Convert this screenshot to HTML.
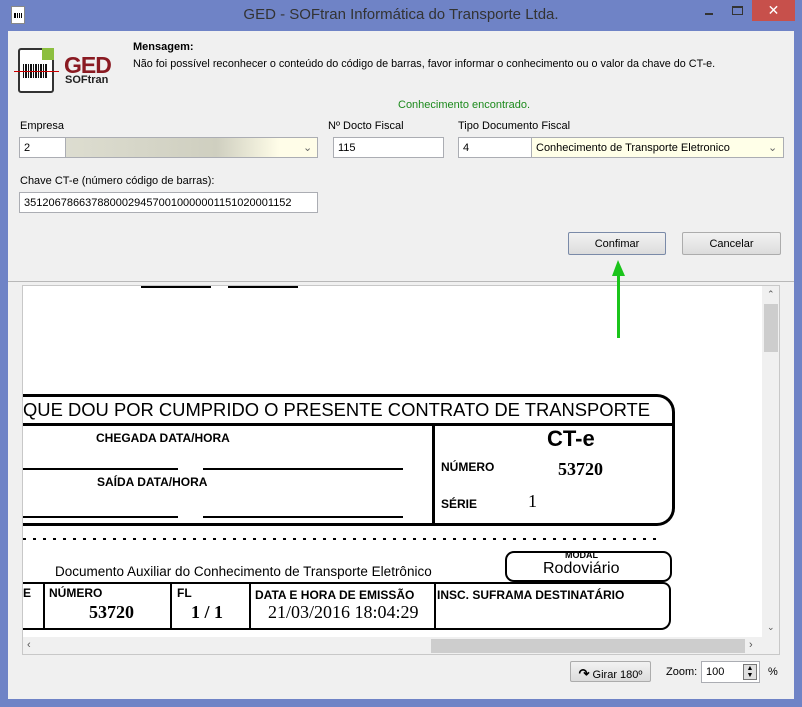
<!DOCTYPE html>
<html><head><meta charset="utf-8"><style>
*{margin:0;padding:0;box-sizing:border-box}
body{width:802px;height:707px;background:#6f83c6;font-family:"Liberation Sans",sans-serif;font-size:11px;color:#000;position:relative;overflow:hidden}
.a{position:absolute}
.client{left:8px;top:31px;width:786px;height:668px;background:#f0f0f0}
.inp{position:absolute;background:#fff;border:1px solid #abadb3;height:21px;padding:4px 0 0 4px;font-size:11px}
.btn{position:absolute;border:1px solid #acacac;border-radius:2px;background:linear-gradient(#f2f2f2,#dcdcdc);text-align:center;font-size:11px;padding-top:5px;height:23px}
.doc{font-family:"Liberation Sans",sans-serif;font-weight:bold;position:absolute;white-space:nowrap}
.ser{font-family:"Liberation Serif",serif;font-weight:bold;position:absolute;white-space:nowrap}
</style></head><body>
<div class="a" style="left:11px;top:6px;width:14px;height:18px;background:#fff;border:1px solid #888"><div style="margin:6px 2px;height:5px;border-left:1px solid #000;border-right:1px solid #000;background:repeating-linear-gradient(90deg,#000 0 1px,#fff 1px 2px)"></div></div>
<div class="a" style="left:0;top:6px;width:802px;text-align:center;font-size:15px;color:#333">GED - SOFtran Informática do Transporte Ltda.</div>
<div class="a" style="left:705px;top:13px;width:8px;height:2px;background:#333"></div>
<div class="a" style="left:732px;top:6px;width:11px;height:9px;border:1px solid #333;border-top-width:2px"></div>
<div class="a" style="left:752px;top:0;width:43px;height:21px;background:#c7504b;color:#fff;text-align:center;font-size:14px;line-height:21px">✕</div>
<div class="a client"></div>
<div class="a" style="left:18px;top:48px;width:36px;height:45px;background:#fff;border:2px solid #333;border-radius:3px"></div>
<div class="a" style="left:42px;top:48px;width:12px;height:12px;background:#8cbf3f"></div>
<div class="a" style="left:23px;top:64px;width:24px;height:14px;background:repeating-linear-gradient(90deg,#111 0 1px,#fff 1px 2px,#111 2px 4px,#fff 4px 5px)"></div>
<div class="a" style="left:14px;top:71px;width:45px;height:1px;background:#c00"></div>
<div class="a" style="left:64px;top:52px;font-size:23px;font-weight:bold;color:#8a1a22;letter-spacing:-1px">GED</div>
<div class="a" style="left:65px;top:74px;font-size:11px;font-weight:bold;color:#222">SOFtran</div>
<div class="a" style="left:133px;top:41px;font-weight:bold">Mensagem:</div>
<div class="a" style="left:133px;top:58px;font-size:10.8px">Não foi possível reconhecer o conteúdo do código de barras, favor informar o conhecimento ou o valor da chave do CT-e.</div>
<div class="a" style="left:398px;top:99px;color:#1c8a1c">Conhecimento encontrado.</div>
<div class="a" style="left:20px;top:120px">Empresa</div>
<div class="a" style="left:328px;top:120px">Nº Docto Fiscal</div>
<div class="a" style="left:458px;top:120px">Tipo Documento Fiscal</div>
<div class="inp" style="left:19px;top:137px;width:47px">2</div>
<div class="inp" style="left:65px;top:137px;width:253px;background:linear-gradient(90deg,#ddddd0 0,#cfcfc0 60%,#fffde8 85%)"></div>
<div class="a" style="left:303px;top:141px;color:#666">⌄</div>
<div class="inp" style="left:333px;top:137px;width:111px">115</div>
<div class="inp" style="left:458px;top:137px;width:74px">4</div>
<div class="inp" style="left:531px;top:137px;width:253px;background:#ffffe8">Conhecimento de Transporte Eletronico</div>
<div class="a" style="left:768px;top:141px;color:#666">⌄</div>
<div class="a" style="left:20px;top:175px">Chave CT-e (número código de barras):</div>
<div class="inp" style="left:19px;top:192px;width:299px">35120678663788000294570010000001151020001152</div>
<div class="btn" style="left:568px;top:232px;width:98px;border-color:#7a8aa8">Confimar</div>
<div class="btn" style="left:682px;top:232px;width:99px">Cancelar</div>
<div class="a" style="left:8px;top:281px;width:786px;height:1px;background:#b8b8b8"></div>
<div class="a" style="left:22px;top:285px;width:758px;height:370px;background:#fff;border:1px solid #c8c8c8;overflow:hidden">
 <div class="a" style="left:118px;top:0;width:70px;height:2px;background:#000"></div>
 <div class="a" style="left:205px;top:0;width:70px;height:2px;background:#000"></div>
 <div class="a" style="left:0;top:108px;width:652px;height:132px;border:3px solid #000;border-left:none;border-radius:0 18px 18px 0"></div>
 <div class="a" style="left:0;top:137px;width:652px;height:3px;background:#000"></div>
 <div class="a" style="left:409px;top:137px;width:3px;height:100px;background:#000"></div>
 <div class="doc" style="left:0;top:113px;font-size:18.4px;font-weight:normal">QUE DOU POR CUMPRIDO O PRESENTE CONTRATO DE TRANSPORTE</div>
 <div class="doc" style="left:73px;top:145px;font-size:12px">CHEGADA DATA/HORA</div>
 <div class="doc" style="left:74px;top:189px;font-size:12px">SAÍDA DATA/HORA</div>
 <div class="a" style="left:0;top:182px;width:155px;height:2px;background:#000"></div>
 <div class="a" style="left:180px;top:182px;width:200px;height:2px;background:#000"></div>
 <div class="a" style="left:0;top:230px;width:155px;height:2px;background:#000"></div>
 <div class="a" style="left:180px;top:230px;width:200px;height:2px;background:#000"></div>
 <div class="doc" style="left:524px;top:140px;font-size:22px">CT-e</div>
 <div class="doc" style="left:418px;top:174px;font-size:12px">NÚMERO</div>
 <div class="ser" style="left:535px;top:173px;font-size:18px">53720</div>
 <div class="doc" style="left:418px;top:211px;font-size:12px">SÉRIE</div>
 <div class="ser" style="left:505px;top:205px;font-size:18px;font-weight:normal">1</div>
 <div class="a" style="left:0;top:252px;width:640px;height:2px;background:repeating-linear-gradient(90deg,#000 0 3px,transparent 3px 10px)"></div>
 <div class="doc" style="left:32px;top:278px;font-size:13.5px;font-weight:normal">Documento Auxiliar do Conhecimento de Transporte Eletrônico</div>
 <div class="a" style="left:482px;top:265px;width:167px;height:31px;border:2px solid #000;border-radius:9px"></div>
 <div class="doc" style="left:542px;top:264px;font-size:9px">MODAL</div>
 <div class="doc" style="left:520px;top:274px;font-size:16px;font-weight:normal">Rodoviário</div>
 <div class="a" style="left:0;top:296px;width:648px;height:48px;border:2px solid #000;border-left:none;border-radius:0 8px 10px 0"></div>
 <div class="a" style="left:20px;top:296px;width:2px;height:48px;background:#000"></div>
 <div class="a" style="left:147px;top:296px;width:2px;height:48px;background:#000"></div>
 <div class="a" style="left:226px;top:296px;width:2px;height:48px;background:#000"></div>
 <div class="a" style="left:411px;top:296px;width:2px;height:48px;background:#000"></div>
 <div class="doc" style="left:0;top:300px;font-size:12px">E</div>
 <div class="doc" style="left:26px;top:300px;font-size:12px">NÚMERO</div>
 <div class="ser" style="left:66px;top:316px;font-size:18px">53720</div>
 <div class="doc" style="left:154px;top:300px;font-size:12px">FL</div>
 <div class="ser" style="left:168px;top:316px;font-size:18px">1 / 1</div>
 <div class="doc" style="left:232px;top:302px;font-size:12px">DATA E HORA DE EMISSÃO</div>
 <div class="ser" style="left:245px;top:316px;font-size:18px;font-weight:normal">21/03/2016 18:04:29</div>
 <div class="doc" style="left:414px;top:302px;font-size:12px">INSC. SUFRAMA DESTINATÁRIO</div>
 <div class="a" style="left:739px;top:0;width:18px;height:351px;background:#f0f0f0"></div>
 <div class="a" style="left:741px;top:18px;width:14px;height:48px;background:#cdcdcd"></div>
 <div class="a" style="left:744px;top:3px;color:#555;font-size:9px">⌃</div>
 <div class="a" style="left:744px;top:336px;color:#555;font-size:9px">⌄</div>
 <div class="a" style="left:0;top:351px;width:757px;height:18px;background:#f0f0f0"></div>
 <div class="a" style="left:408px;top:353px;width:314px;height:14px;background:#cdcdcd"></div>
 <div class="a" style="left:4px;top:353px;color:#555">‹</div>
 <div class="a" style="left:726px;top:353px;color:#555">›</div>
</div>
<div class="a" style="left:617px;top:270px;width:3px;height:68px;background:#1bc41b"></div>
<div class="a" style="left:612px;top:260px;width:0;height:0;border-left:6px solid transparent;border-right:7px solid transparent;border-bottom:16px solid #1bc41b"></div>
<div class="btn" style="left:570px;top:661px;width:81px;height:21px;padding-top:4px"><b style="font-size:13px">↷</b> Girar 180º</div>
<div class="a" style="left:666px;top:666px">Zoom:</div>
<div class="inp" style="left:701px;top:661px;width:59px;height:22px">100</div>
<div class="a" style="left:743px;top:664px;width:14px;height:16px;background:#e0e0e0;border:1px solid #777;font-size:7px;line-height:7px;text-align:center">▲<br>▼</div>
<div class="a" style="left:768px;top:666px">%</div>
</body></html>
